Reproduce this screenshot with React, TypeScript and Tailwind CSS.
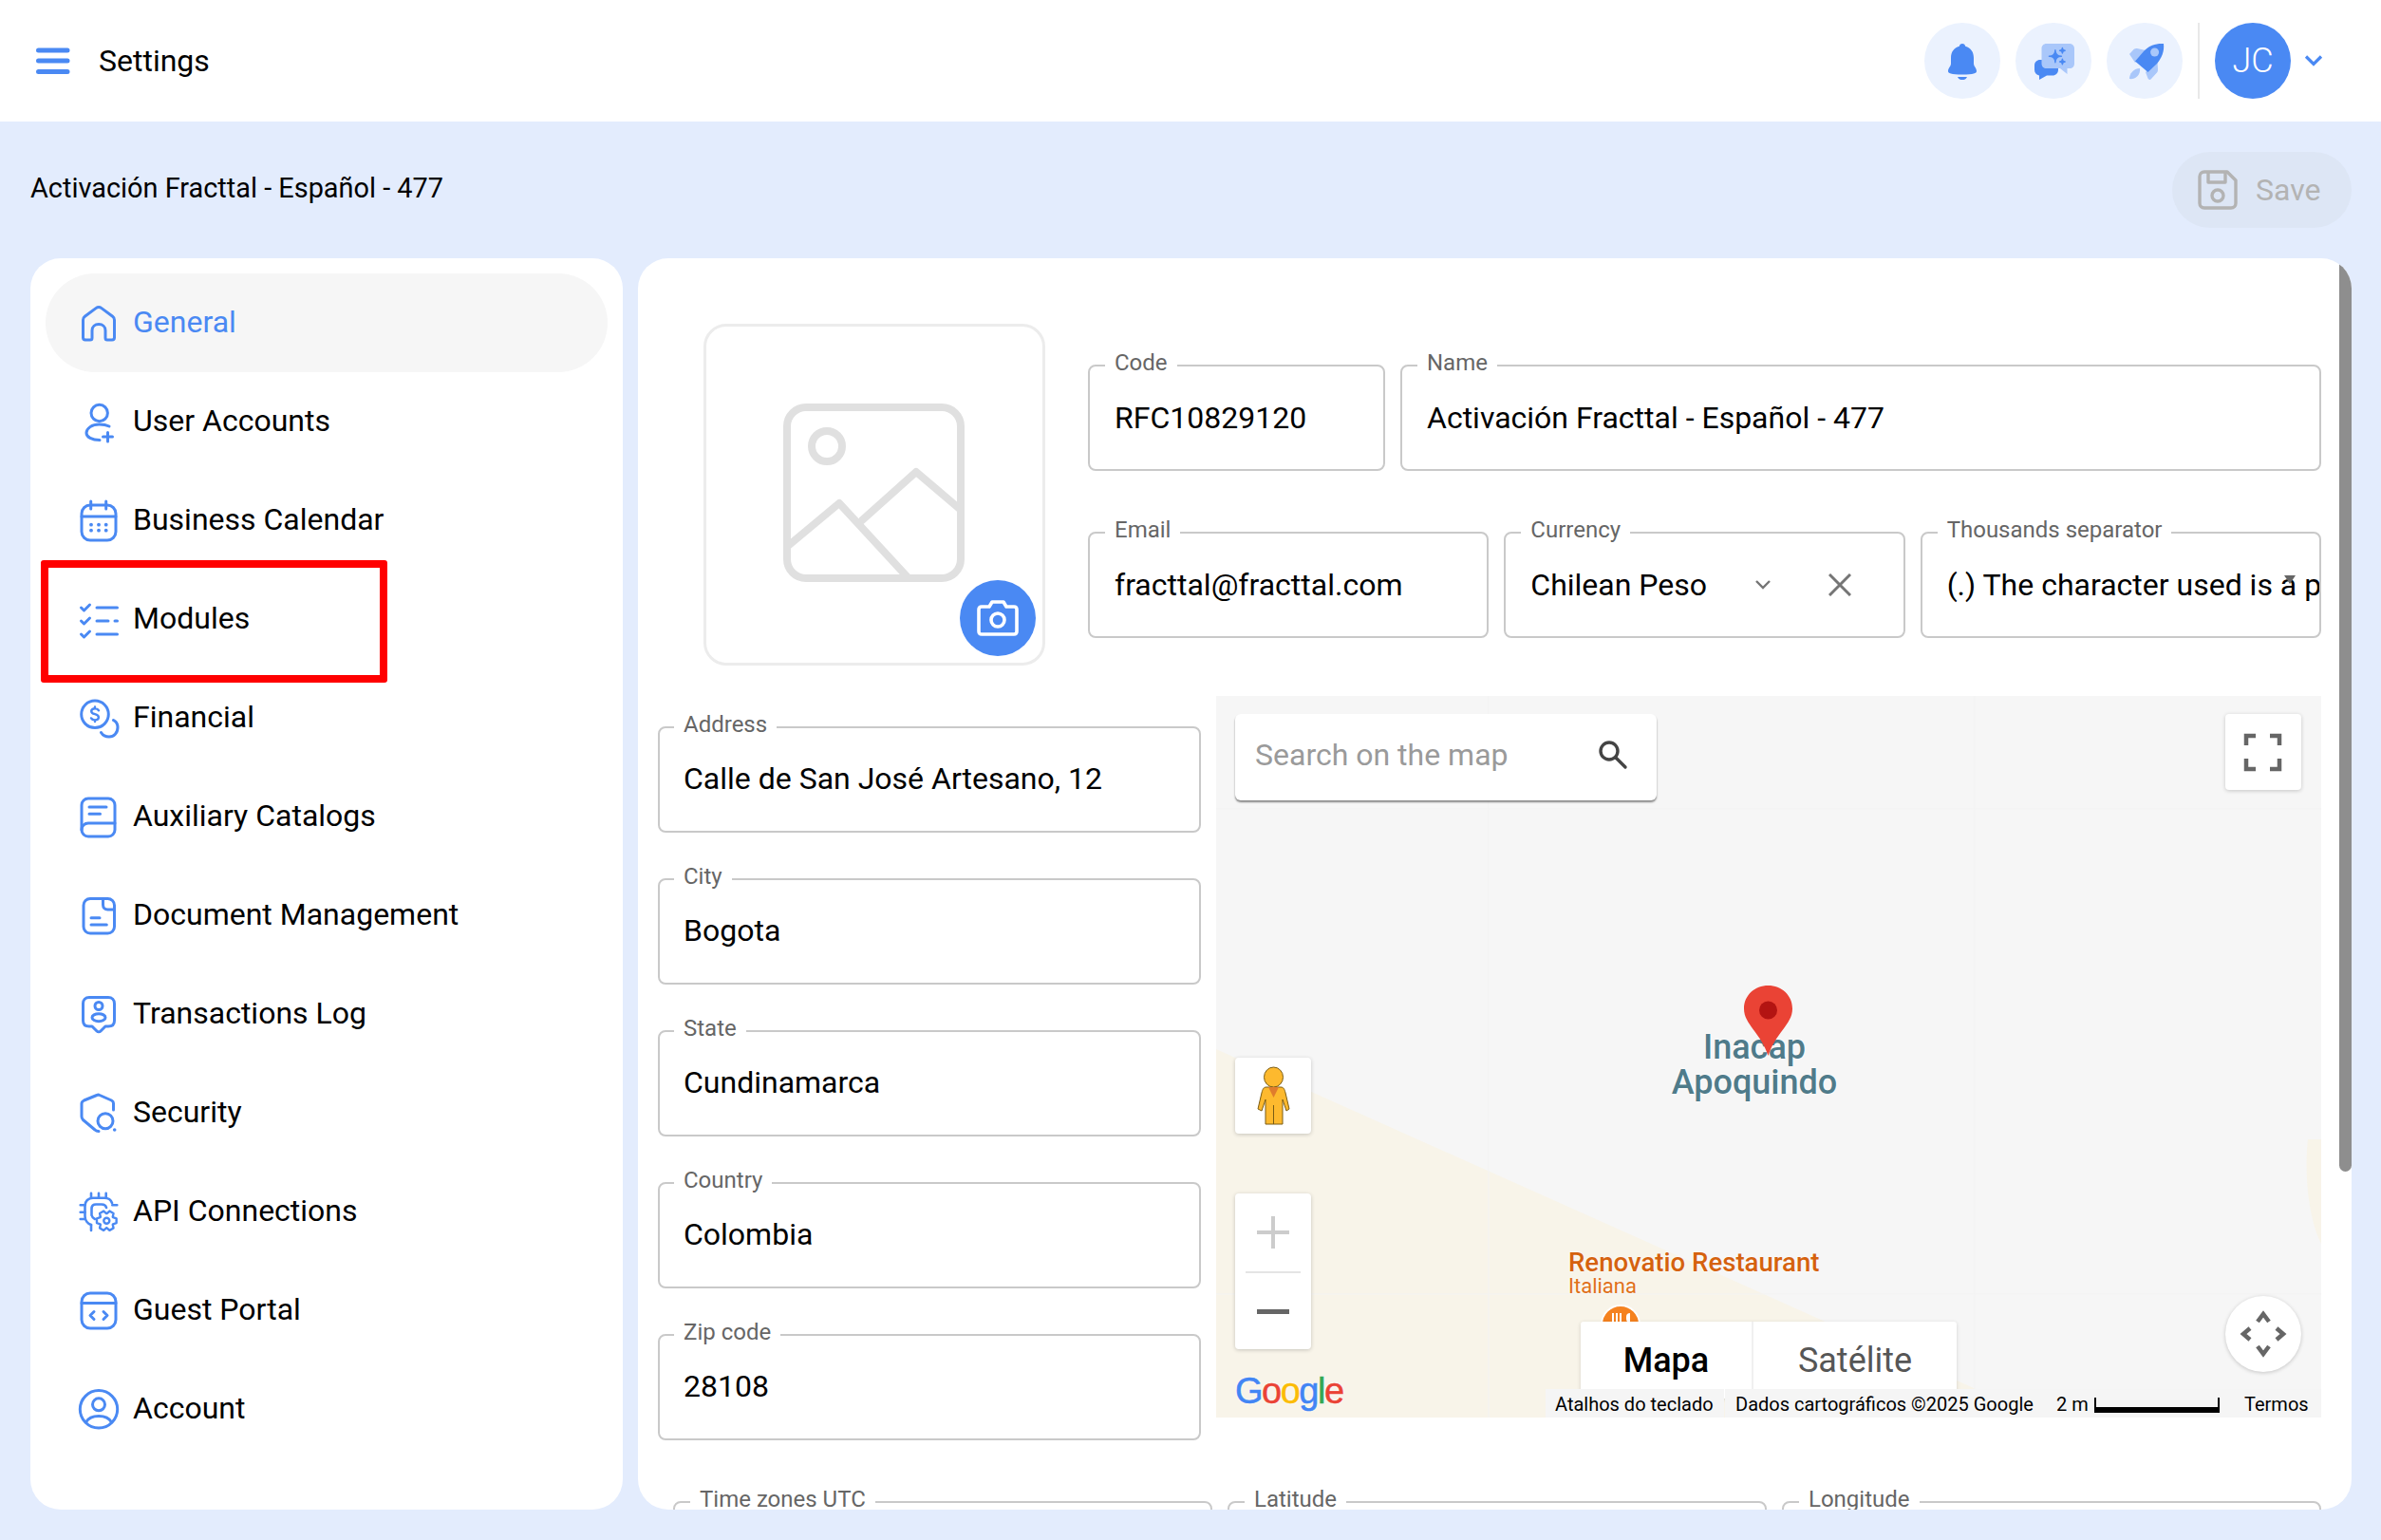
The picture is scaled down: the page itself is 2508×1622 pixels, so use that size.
import React from "react";

const BLUE = "#4a89f3";

function Ico({ children }: { children: React.ReactNode }) {
  return (
    <svg viewBox="0 0 48 48" className="w-[48px] h-[48px] shrink-0" fill="none" stroke={BLUE} strokeWidth={3} strokeLinecap="round" strokeLinejoin="round">
      {children}
    </svg>
  );
}

function gearPath(cx: number, cy: number) {
  const pts: string[] = [];
  for (let k = 0; k < 6; k++) {
    const a = (k * Math.PI) / 3;
    const add = (r: number, d: number) => {
      const t = a + (d * Math.PI) / 180;
      pts.push(`${(cx + r * Math.cos(t)).toFixed(2)} ${(cy + r * Math.sin(t)).toFixed(2)}`);
    };
    add(7.6, -28);
    add(10.6, -13);
    add(10.6, 13);
    add(7.6, 28);
  }
  return "M" + pts.join(" L") + " Z";
}

const items: { label: string; icon: React.ReactNode }[] = [
  {
    label: "General",
    icon: <path d="M7.5 21 C7.5 19.5 8.2 18.2 9.4 17.3 L21 8.6 C22.8 7.3 25.2 7.3 27 8.6 L38.6 17.3 C39.8 18.2 40.5 19.5 40.5 21 V39.5 C40.5 41 39.5 42 38 42 H33 C31.7 42 31 41.2 31 40 V32 C31 28.2 28 25.5 24 25.5 C20 25.5 17 28.2 17 32 V40 C17 41.2 16.3 42 15 42 H10 C8.5 42 7.5 41 7.5 39.5 Z" />,
  },
  {
    label: "User Accounts",
    icon: (
      <>
        <circle cx="24.7" cy="15" r="8.7" />
        <path d="M35 29 C32 27.5 28 27 24.5 27 C17 27 11 31 11 36 C11 40.5 17 43.5 25 43.5" />
        <path d="M28.5 40 H38.5 M33.5 35.5 V45" />
      </>
    ),
  },
  {
    label: "Business Calendar",
    icon: (
      <>
        <rect x="6" y="8" width="36" height="37" rx="9" />
        <path d="M6 20 H42 M15.7 4 V12 M31.7 4 V12" />
        <g fill={BLUE} stroke="none">
          <circle cx="16" cy="28.7" r="1.9" />
          <circle cx="24" cy="28.7" r="1.9" />
          <circle cx="31.7" cy="28.7" r="1.9" />
          <circle cx="16" cy="34.7" r="1.9" />
          <circle cx="24" cy="34.7" r="1.9" />
          <circle cx="31.7" cy="34.7" r="1.9" />
        </g>
      </>
    ),
  },
  {
    label: "Modules",
    icon: (
      <>
        <path d="M5.5 12 L8.5 15 L14.5 9 M5.5 26 L8.5 29 L14.5 23 M5.5 40 L8.5 43 L14.5 37" />
        <path d="M22 12 H43.5 M22 26 H34 M41 26 H43.5 M22 40 H43.5" />
      </>
    ),
  },
  {
    label: "Financial",
    icon: (
      <>
        <circle cx="20" cy="20.3" r="14.3" />
        <path d="M24 16.3 C23.2 14.9 21.8 14.2 20 14.2 C17.8 14.2 16.2 15.3 16.2 17 C16.2 19 18 19.7 20 20.2 C22 20.7 23.9 21.5 23.9 23.5 C23.9 25.3 22.2 26.4 20 26.4 C18.2 26.4 16.8 25.8 16 24.4 M20 12.5 V14.2 M20 26.4 V28" strokeWidth="2.4" />
        <path d="M39.5 26.5 C42.5 28 44 31 44 34 C44 40 40 44 35 44 C31 44 28 42 26.5 39.5" />
      </>
    ),
  },
  {
    label: "Auxiliary Catalogs",
    icon: (
      <>
        <rect x="6" y="5" width="35" height="40" rx="7" />
        <path d="M6 38 C6 34 9 31 13 31 H41 M14 14 H32 M14 21.3 H25.5" />
      </>
    ),
  },
  {
    label: "Document Management",
    icon: (
      <>
        <rect x="8" y="6.5" width="32.5" height="36.5" rx="7" />
        <path d="M28.5 7 V13 C28.5 16 30.5 18 33.5 18 H40 M16 26.7 H25 M16 34 H32.3" />
      </>
    ),
  },
  {
    label: "Transactions Log",
    icon: (
      <>
        <path d="M14 6.5 H34 C38 6.5 40.5 9 40.5 13 V31 C40.5 35 38 37 34 37 H31 L26 42 C25 43 23 43 22 42 L17 37 H14 C10 37 7.5 35 7.5 31 V13 C7.5 9 10 6.5 14 6.5 Z" />
        <circle cx="24" cy="15.5" r="4" />
        <ellipse cx="24" cy="27.7" rx="7" ry="4" />
      </>
    ),
  },
  {
    label: "Security",
    icon: (
      <>
        <path d="M39.5 21 V14 C39.5 12.5 38.5 11.5 37.5 11 L25 5.5 C24 5 23 5 22 5.5 L8.5 11 C7 11.7 6 12.5 6 14.5 V28 C6 29.5 6.7 30.5 7.5 31.5 L20 42 C21 43 22.5 43.5 24 43.5" />
        <circle cx="31" cy="32.7" r="8" />
        <circle cx="40.7" cy="42" r="1.8" fill={BLUE} stroke="none" />
      </>
    ),
  },
  {
    label: "API Connections",
    icon: (
      <>
        <path d="M9.5 29 V18 C9.5 13 13 9.7 18 9.7 H30 C34 9.7 37 12 38 15 M9.5 29 C9.5 33 12 37 16 38" strokeWidth="2.6" />
        <path d="M16.5 28 V21 C16.5 18 18.5 16.5 21 16.5 H27 C30 16.5 31.5 17.5 32 20 M16.5 28 C17 30 18 31 20 32" strokeWidth="2.6" />
        <path d="M16 4.7 V9.7 M24 4.7 V9.7 M31.7 4.7 V9.7 M4.7 17.3 H9.5 M4.7 24.7 H9.5 M4.7 32 H9.5 M38.3 17.3 H43.3 M16 38 V44" strokeWidth="2.6" />
        <path d={gearPath(32.3, 33.7)} strokeWidth="2.4" fill="#ffffff" />
        <circle cx="32.3" cy="33.7" r="3" strokeWidth="2.4" />
      </>
    ),
  },
  {
    label: "Guest Portal",
    icon: (
      <>
        <rect x="6" y="6" width="36" height="37" rx="9" />
        <path d="M6 16.5 H42 M19 25.5 L15 29.5 L19 33.5 M29 25.5 L33 29.5 L29 33.5" />
      </>
    ),
  },
  {
    label: "Account",
    icon: (
      <>
        <circle cx="24" cy="24.3" r="19.7" />
        <circle cx="24" cy="19.3" r="6.5" />
        <path d="M10.5 38 C13 33.5 18 31.5 24 31.5 C30 31.5 35 33.5 37.5 38" />
      </>
    ),
  },
];

function Field({
  label,
  value,
  className = "",
  compact = false,
  children,
}: {
  label: string;
  value: string;
  className?: string;
  compact?: boolean;
  children?: React.ReactNode;
}) {
  return (
    <div className={`relative h-[112px] rounded-[8px] border-2 border-[#c9c9c9] flex items-center ${compact ? "pl-[25px]" : "pl-[26px]"} ${className}`}>
      <span className={`absolute top-[-19px] bg-white px-[10px] text-[24px] leading-[30px] text-[#666666] whitespace-nowrap ${compact ? "left-[15px]" : "left-[16px]"}`}>{label}</span>
      <span className={`text-[32px] leading-[40px] text-black whitespace-nowrap overflow-hidden flex-1 ${compact ? "-mt-[2px]" : ""}`}>{value}</span>
      {children}
    </div>
  );
}

function Star({ x, y, s }: { x: number; y: number; s: number }) {
  return <path d={`M${x} ${y - s} Q${x} ${y} ${x + s} ${y} Q${x} ${y} ${x} ${y + s} Q${x} ${y} ${x - s} ${y} Q${x} ${y} ${x} ${y - s} Z`} stroke={BLUE} strokeWidth="1.4" strokeLinejoin="round" />;
}

function HeaderCircle({ children }: { children: React.ReactNode }) {
  return <div className="w-[80px] h-[80px] rounded-full bg-[#ebf2fe] flex items-center justify-center">{children}</div>;
}

function MapArea() {
  return (
    <div className="relative flex-1 h-[760px] bg-[#f6f6f6] overflow-hidden">
      <svg className="absolute inset-0 w-full h-full" viewBox="0 0 1164 760">
        <path d="M0 372 L257 487 L637 657 L798 729 L850 760 L0 760 Z" fill="#f8f4e9" />
        <path d="M1150 467 C1146 500 1150 550 1164 577 V467 Z" fill="#f8f4e9" />
        <path d="M287 0 V760 M799 0 V760 M0 119 H1164 M0 630 H1164" stroke="#f3f3f3" strokeWidth="1" fill="none" />
      </svg>

      <div className="absolute left-[371px] top-[582px] text-[27.6px] leading-[30px] font-medium text-[#d5620e] whitespace-nowrap [text-shadow:0_0_3px_#ffffff]">Renovatio Restaurant</div>
      <div className="absolute left-[371px] top-[609px] text-[22px] leading-[26px] text-[#e0701a] whitespace-nowrap [text-shadow:0_0_3px_#ffffff]">Italiana</div>
      <div className="absolute left-[405px] top-[641px] w-[42px] h-[42px] rounded-full bg-[#f5821f] border-2 border-white flex justify-center gap-[2px] pt-[7px]">
        <div className="w-[2px] h-[10px] bg-white" />
        <div className="w-[2px] h-[10px] bg-white" />
        <div className="w-[2px] h-[10px] bg-white" />
        <div className="w-[4px] h-[10px] bg-white ml-[3px] rounded-l-full" />
      </div>

      <div className="absolute left-[467px] top-[352px] w-[200px] text-center text-[36px] leading-[37px] font-medium text-[#4f7b8a] [text-shadow:0_0_3px_#ffffff]">
        Inacap
        <br />
        Apoquindo
      </div>
      <svg className="absolute left-[556px] top-[305px] w-[51px] h-[74px]" viewBox="0 0 51 74">
        <path d="M25.5 0 C39.5 0 51 10 51 24.5 C51 41 33 50 25.5 74 C18 50 0 41 0 24.5 C0 10 11.5 0 25.5 0 Z" fill="#ea4335" />
        <circle cx="25.5" cy="26" r="9.5" fill="#b31412" />
      </svg>

      <div className="absolute left-[20px] top-[19px] w-[444px] h-[91px] bg-white rounded-[6px] shadow-[0_2px_2px_rgba(0,0,0,0.45)] flex items-start pl-[21px] pt-[23px]">
        <span className="text-[32px] leading-[40px] text-[#9a9a9a] flex-1">Search on the map</span>
        <svg viewBox="0 0 36 36" className="w-[36px] h-[36px] mr-[28px] mt-[2px]" fill="none" stroke="#444444" strokeWidth="3.4">
          <circle cx="14" cy="14" r="9" />
          <path d="M21 21 L31 31" strokeLinecap="round" />
        </svg>
      </div>

      <div className="absolute left-[1063px] top-[19px] w-[80px] h-[80px] bg-white rounded-[4px] shadow-[0_1px_4px_rgba(0,0,0,0.2)]">
        <svg viewBox="0 0 80 80" className="w-full h-full" fill="none" stroke="#666666" strokeWidth="4.5">
          <path d="M22 33 V23 H32 M47 23 H57 V33 M22 47 V58 H32 M47 58 H57 V47" />
        </svg>
      </div>

      <div className="absolute left-[20px] top-[381px] w-[80px] h-[80px] bg-white rounded-[4px] shadow-[0_1px_4px_rgba(0,0,0,0.2)]">
        <svg viewBox="0 0 80 80" className="w-full h-full">
          <path d="M33 31 H48 C51 31 52 33 53 37 L57 54 L54 56 L50 44 V70 H32 V44 L28 56 L24 54 L28 37 C29 33 30 31 33 31 Z" fill="#fdb92e" stroke="#7a5c14" strokeWidth="1" />
          <ellipse cx="40.5" cy="20.5" rx="10" ry="10.5" fill="#fdb92e" stroke="#7a5c14" strokeWidth="1" />
          <path d="M35 31 H46 L40.5 42 Z" fill="#e07c2c" />
          <path d="M40.5 50 V70" stroke="#7a5c14" strokeWidth="1" />
        </svg>
      </div>

      <div className="absolute left-[20px] top-[524px] w-[80px] h-[164px] bg-white rounded-[4px] shadow-[0_1px_4px_rgba(0,0,0,0.2)] flex flex-col items-center">
        <div className="h-[82px] w-full flex items-center justify-center">
          <svg viewBox="0 0 34 34" className="w-[34px] h-[34px]" fill="none" stroke="#cccccc" strokeWidth="4">
            <path d="M0 17 H34 M17 0 V34" />
          </svg>
        </div>
        <div className="w-[58px] h-[2px] bg-[#e4e4e4]" />
        <div className="flex-1 w-full flex items-center justify-center">
          <div className="w-[34px] h-[5px] bg-[#666666]" />
        </div>
      </div>

      <div className="absolute left-[1063px] top-[632px] w-[80px] h-[80px] rounded-full bg-white shadow-[0_1px_4px_rgba(0,0,0,0.2)]">
        <svg viewBox="0 0 80 80" className="w-full h-full" fill="none" stroke="#666666" strokeWidth="4.5">
          <path d="M34 27 L40 19 L46 27 M34 53 L40 61 L46 53 M26 34 L19 40 L26 46 M54 34 L61 40 L54 46" />
        </svg>
      </div>

      <div className="absolute left-[384px] top-[659px] w-[396px] h-[81px] bg-white rounded-[3px] shadow-[0_1px_4px_rgba(0,0,0,0.15)] flex">
        <div className="w-[182px] flex items-center justify-center text-[36px] font-medium text-black border-r-2 border-[#f0f0f0]">Mapa</div>
        <div className="flex-1 flex items-center justify-center text-[36px] text-[#565656]">Satélite</div>
      </div>

      <div className="absolute left-[20px] top-[710px] text-[38px] leading-[44px] font-[Liberation_Sans,sans-serif] tracking-[-1.5px] [-webkit-text-stroke:0.5px_currentColor] [text-shadow:0_0_3px_#ffffff]">
        <span className="text-[#4285f4]">G</span>
        <span className="text-[#ea4335]">o</span>
        <span className="text-[#fbbc05]">o</span>
        <span className="text-[#4285f4]">g</span>
        <span className="text-[#34a853]">l</span>
        <span className="text-[#ea4335]">e</span>
      </div>

      <div className="absolute left-[347px] right-0 bottom-0 h-[30px] flex text-[20px] leading-[32px] text-black whitespace-nowrap">
        <div className="w-[188px] bg-[#f5f5f5] pl-[10px] mr-[1px]">Atalhos do teclado</div>
        <div className="flex-1 bg-[#f5f5f5] flex pl-[11px]">
          <span className="w-[338px]">Dados cartográficos ©2025 Google</span>
          <span className="w-[40px]">2 m</span>
          <svg viewBox="0 0 132 30" className="w-[132px] h-[30px]">
            <path d="M1 9 V24 H131 V9" fill="none" stroke="#000000" strokeWidth="2" />
            <path d="M0 19 H132 V24 H0 Z" fill="#000000" />
          </svg>
          <span className="ml-[26px]">Termos</span>
        </div>
      </div>
    </div>
  );
}

export default function App() {
  return (
    <div className="w-[2508px] h-[1622px] overflow-hidden bg-[#e3ecfd] font-[Roboto,sans-serif] flex flex-col text-black">
      <header className="h-[128px] shrink-0 bg-white flex items-center pl-[37px] pr-[59px]">
        <svg viewBox="0 0 37 30" className="w-[37px] h-[30px]" fill="none" stroke={BLUE} strokeWidth="5" strokeLinecap="round">
          <path d="M3.5 4 H34 M3.5 15 H34 M3.5 26.5 H34" />
        </svg>
        <h1 className="ml-[30px] text-[32px] leading-[40px] font-normal flex-1 -mt-[1px]">Settings</h1>
        <div className="flex items-center gap-[16px]">
          <HeaderCircle>
            <svg viewBox="0 0 48 48" className="w-[48px] h-[48px]" fill={BLUE}>
              <path d="M24 6 C25.8 6 27 7.2 27.2 8.7 C33 10 36 15 36 21 V27 C36 30 39 31.5 39 35 C39 37 36 38.5 24 38.5 C12 38.5 9 37 9 35 C9 31.5 12 30 12 27 V21 C12 15 15 10 20.8 8.7 C21 7.2 22.2 6 24 6 Z" />
              <path d="M19 41 H29 C28 43.5 26 44 24 44 C22 44 20 43.5 19 41 Z" />
            </svg>
          </HeaderCircle>
          <HeaderCircle>
            <svg viewBox="0 0 48 48" className="w-[48px] h-[48px]">
              <path d="M10 23 H23 C26.5 23 29 25.5 29 29 V33.5 C29 37 26.5 39.5 23 39.5 H17 L9 44 V39.5 C6 39 4 36.5 4 33.5 V29 C4 25.5 6.5 23 10 23 Z" fill={BLUE} />
              <path d="M16.5 6 H41 C43.8 6 46 8.2 46 11 V27 C46 30 44 32 41 32 H38.5 V38 L31 32 H16.5 C13.7 32 11.5 30 11.5 27 V11 C11.5 8.2 13.7 6 16.5 6 Z" fill="#a9c7fa" />
              <g fill={BLUE}>
                <Star x={25.9} y={19.3} s={6.5} />
                <Star x={33.4} y={13.3} s={2.8} />
                <Star x={33.4} y={25} s={2.8} />
              </g>
            </svg>
          </HeaderCircle>
          <HeaderCircle>
            <svg viewBox="0 0 48 48" className="w-[48px] h-[48px]">
              <path d="M8 17 L12.5 12 C13.5 11 15 11 16 11 L25 13 L14 26 Z" fill="#a9c7fa" />
              <path d="M37.5 25 L38 33 C38 35 37.5 36 36.5 37 L31 43 C30 44.5 28 44 27.5 42.5 L25 36 Z" fill="#a9c7fa" />
              <path d="M19 32 C12 32 8 38 8 43 C13 44 20 40 19 32 Z" fill="#a9c7fa" />
              <path d="M44 6 C45 14 42 21 37 27 L27.5 36 L14 24.5 L24 13 C29 8 36 5.5 44 6 Z" fill={BLUE} />
              <circle cx="34.6" cy="15" r="4.5" fill="#a9c7fa" />
            </svg>
          </HeaderCircle>
          <div className="w-[2px] h-[80px] bg-[#e8e8e8]" />
          <div className="w-[80px] h-[80px] rounded-full bg-[#4a89f3] flex items-center justify-center text-white text-[36px] font-light">JC</div>
          <svg viewBox="0 0 24 24" className="w-[24px] h-[24px] -ml-[4px]" fill="none" stroke={BLUE} strokeWidth="3.2">
            <path d="M4 7.5 L12 15.5 L20 7.5" />
          </svg>
        </div>
      </header>

      <div className="h-[144px] shrink-0 flex items-center justify-between pl-[32px] pr-[31px]">
        <div className="text-[28.9px] leading-[36px] -mt-[4px]">Activación Fracttal - Español - 477</div>
        <div className="w-[189px] h-[80px] rounded-full bg-[#dde6f5] flex items-center pl-[27px] text-[32px] text-[#b3b3b3]">
          <svg viewBox="0 0 42 42" className="w-[42px] h-[42px] mr-[19px]" fill="none" stroke="#b3b3b3" strokeWidth="3.4" strokeLinejoin="round">
            <path d="M7 2 H31 L40 11 V35 C40 38 38 40 35 40 H7 C4 40 2 38 2 35 V7 C2 4 4 2 7 2 Z" />
            <path d="M11 2 V13 H29 V2" />
            <circle cx="21" cy="27" r="6" />
          </svg>
          Save
        </div>
      </div>

      <main className="flex-1 flex gap-[16px] pl-[32px] pr-[31px] pb-[32px] min-h-0">
        <nav className="relative w-[624px] shrink-0 bg-white rounded-[32px] p-[16px]">
          {items.map((it, i) => (
            <div key={it.label} className={`h-[104px] flex items-center pl-[32px] gap-[12px] rounded-full ${i === 0 ? "bg-[#f6f6f6]" : ""}`}>
              <Ico>{it.icon}</Ico>
              <span className={`text-[32px] leading-[40px] -mt-[2px] ${i === 0 ? "text-[#4a89f3]" : "text-black"}`}>{it.label}</span>
            </div>
          ))}
          <div className="absolute left-[11px] top-[318px] w-[365px] h-[129px] border-[8px] border-[#ff0000] rounded-[3px]" />
        </nav>

        <section className="relative flex-1 bg-white rounded-[32px] overflow-hidden pl-[20px] pr-[32px] pt-[69px]">
          <div className="absolute right-0 top-0 w-[13px] h-[962px] bg-[#8e8e8e] rounded-b-full" />

          <div className="flex">
            <div className="relative ml-[49px] w-[360px] h-[360px] shrink-0 rounded-[24px] border-[3px] border-[#ececec] flex items-center justify-center">
              <svg viewBox="0 0 191 188" className="w-[191px] h-[188px] -mt-[4px] -ml-[1px]" fill="none" stroke="#e0e0e0" strokeWidth="8" strokeLinejoin="round" strokeLinecap="round">
                <rect x="4" y="4" width="183" height="180" rx="20" />
                <circle cx="46" cy="45" r="16" />
                <path d="M5 150 L59 105 L131 183" />
                <path d="M83 123 L140 72 L187 112" />
              </svg>
              <div className="absolute right-[7px] bottom-[7px] w-[80px] h-[80px] rounded-full bg-[#4a89f3] flex items-center justify-center">
                <svg viewBox="0 0 44 40" className="w-[44px] h-[40px]" fill="none" stroke="#ffffff" strokeWidth="3.6" strokeLinejoin="round">
                  <path d="M5 8 H13 L16 3 H28 L31 8 H39 C41 8 42 9 42 11 V34 C42 36 41 37 39 37 H5 C3 37 2 36 2 34 V11 C2 9 3 8 5 8 Z" />
                  <circle cx="22" cy="22" r="7" />
                </svg>
              </div>
            </div>
            <div className="flex-1 ml-[45px] pt-[43px] flex flex-col gap-[64px]">
              <div className="flex gap-[16px]">
                <Field label="Code" value="RFC10829120" className="w-[313px] shrink-0" />
                <Field label="Name" value="Activación Fracttal - Español - 477" className="flex-1" />
              </div>
              <div className="grid grid-cols-3 gap-[16px]">
                <Field label="Email" value="fracttal@fracttal.com" />
                <Field label="Currency" value="Chilean Peso">
                  <svg viewBox="0 0 16 10" className="w-[16px] h-[10px] mr-[61px]" fill="none" stroke="#757575" strokeWidth="2.4">
                    <path d="M1 1 L8 8 L15 1" />
                  </svg>
                  <svg viewBox="0 0 24 24" className="w-[24px] h-[24px] mr-[55px]" fill="none" stroke="#757575" strokeWidth="3">
                    <path d="M1 1 L23 23 M23 1 L1 23" />
                  </svg>
                </Field>
                <Field label="Thousands separator" value="(.) The character used is a p">
                  <div className="absolute left-[381px] top-[44px] w-0 h-0 border-l-[6px] border-r-[6px] border-t-[9px] border-l-transparent border-r-transparent border-t-[#666666]" />
                </Field>
              </div>
            </div>
          </div>

          <div className="flex gap-[16px] mt-[32px]">
            <div className="w-[572px] ml-[1px] shrink-0 pt-[32px] flex flex-col gap-[48px]">
              <Field compact label="Address" value="Calle de San José Artesano, 12" />
              <Field compact label="City" value="Bogota" />
              <Field compact label="State" value="Cundinamarca" />
              <Field compact label="Country" value="Colombia" />
              <Field compact label="Zip code" value="28108" />
            </div>
            <MapArea />
          </div>

          <div className="grid grid-cols-3 gap-[16px] ml-[17px] mt-[64px]">
            <Field label="Time zones UTC" value="" />
            <Field label="Latitude" value="" />
            <Field label="Longitude" value="" />
          </div>
        </section>
      </main>
    </div>
  );
}
